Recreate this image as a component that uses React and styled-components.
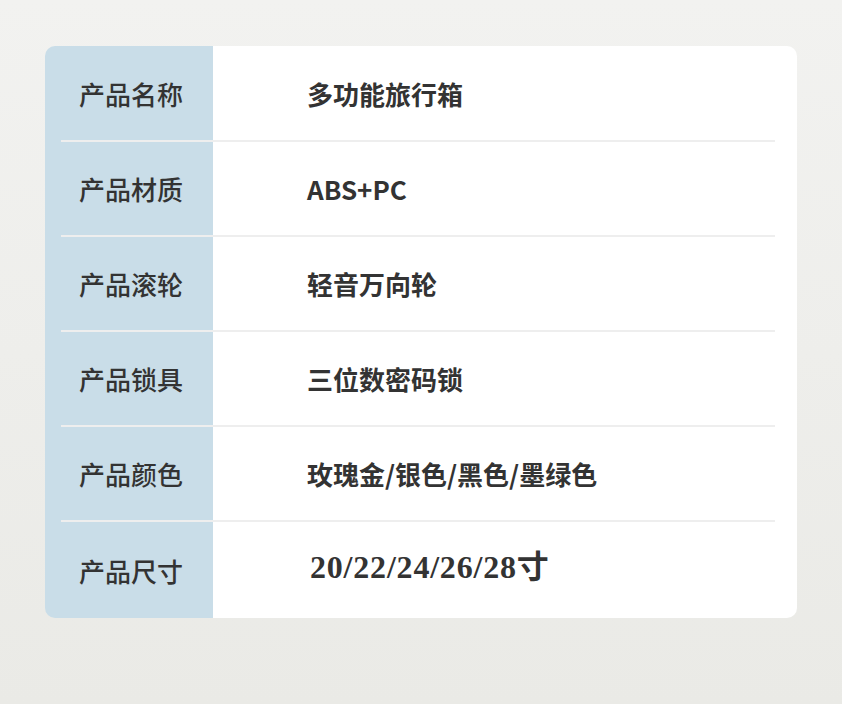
import React from 'react'
import styled, { createGlobalStyle } from 'styled-components'

const GlobalStyle = createGlobalStyle`
html, body {
  margin: 0;
  padding: 0;
}
body {
  font-family: "Noto Sans CJK SC", "Noto Sans", sans-serif;
  background: linear-gradient(to bottom, #f2f2f0 0%, #eeeeeb 50%, #eaeae6 100%);
  min-height: 704px;
}
`

const Page = styled.div`
padding: 46px 45px 0 45px;
height: 704px;
box-sizing: border-box;
`

const Card = styled.div`
border-radius: 10px;
overflow: hidden;
padding-top: 1px;
background: linear-gradient(to right, #c9dde8 168px, #ffffff 168px);
display: flex;
flex-direction: column;
`

const Row = styled.div`
display: flex;
align-items: center;
height: ${props => props.$last ? '96px' : '93px'};
`

const Divider = styled.div`
height: 2px;
margin: 0 22px 0 16px;
background: #eeeeee;
`

const Label = styled.div`
width: 168px;
flex-shrink: 0;
text-align: center;
font-size: 26px;
font-weight: 500;
color: #333333;
padding-left: 4px;
box-sizing: border-box;
`

const Value = styled.div`
padding-left: 94px;
font-size: 26px;
font-weight: 700;
color: #333333;
`

const SerifValue = styled.div`
padding-left: 97px;
padding-bottom: 12px;
font-family: "Liberation Serif", "Noto Sans CJK SC", serif;
font-size: 32px;
font-weight: 700;
color: #333333;
letter-spacing: 0.8px;
`

const specs = [
  { label: '产品名称', value: '多功能旅行箱' },
  { label: '产品材质', value: 'ABS+PC' },
  { label: '产品滚轮', value: '轻音万向轮' },
  { label: '产品锁具', value: '三位数密码锁' },
  { label: '产品颜色', value: '玫瑰金/银色/黑色/墨绿色' },
]

const App = () => {
  return (
    <Page>
      <GlobalStyle />
      <Card>
        {specs.map(spec => (
          <React.Fragment key={spec.label}>
            <Row>
              <Label>{spec.label}</Label>
              <Value>{spec.value}</Value>
            </Row>
            <Divider />
          </React.Fragment>
        ))}
        <Row $last>
          <Label>产品尺寸</Label>
          <SerifValue>20/22/24/26/28寸</SerifValue>
        </Row>
      </Card>
    </Page>
  )
}

export default App
